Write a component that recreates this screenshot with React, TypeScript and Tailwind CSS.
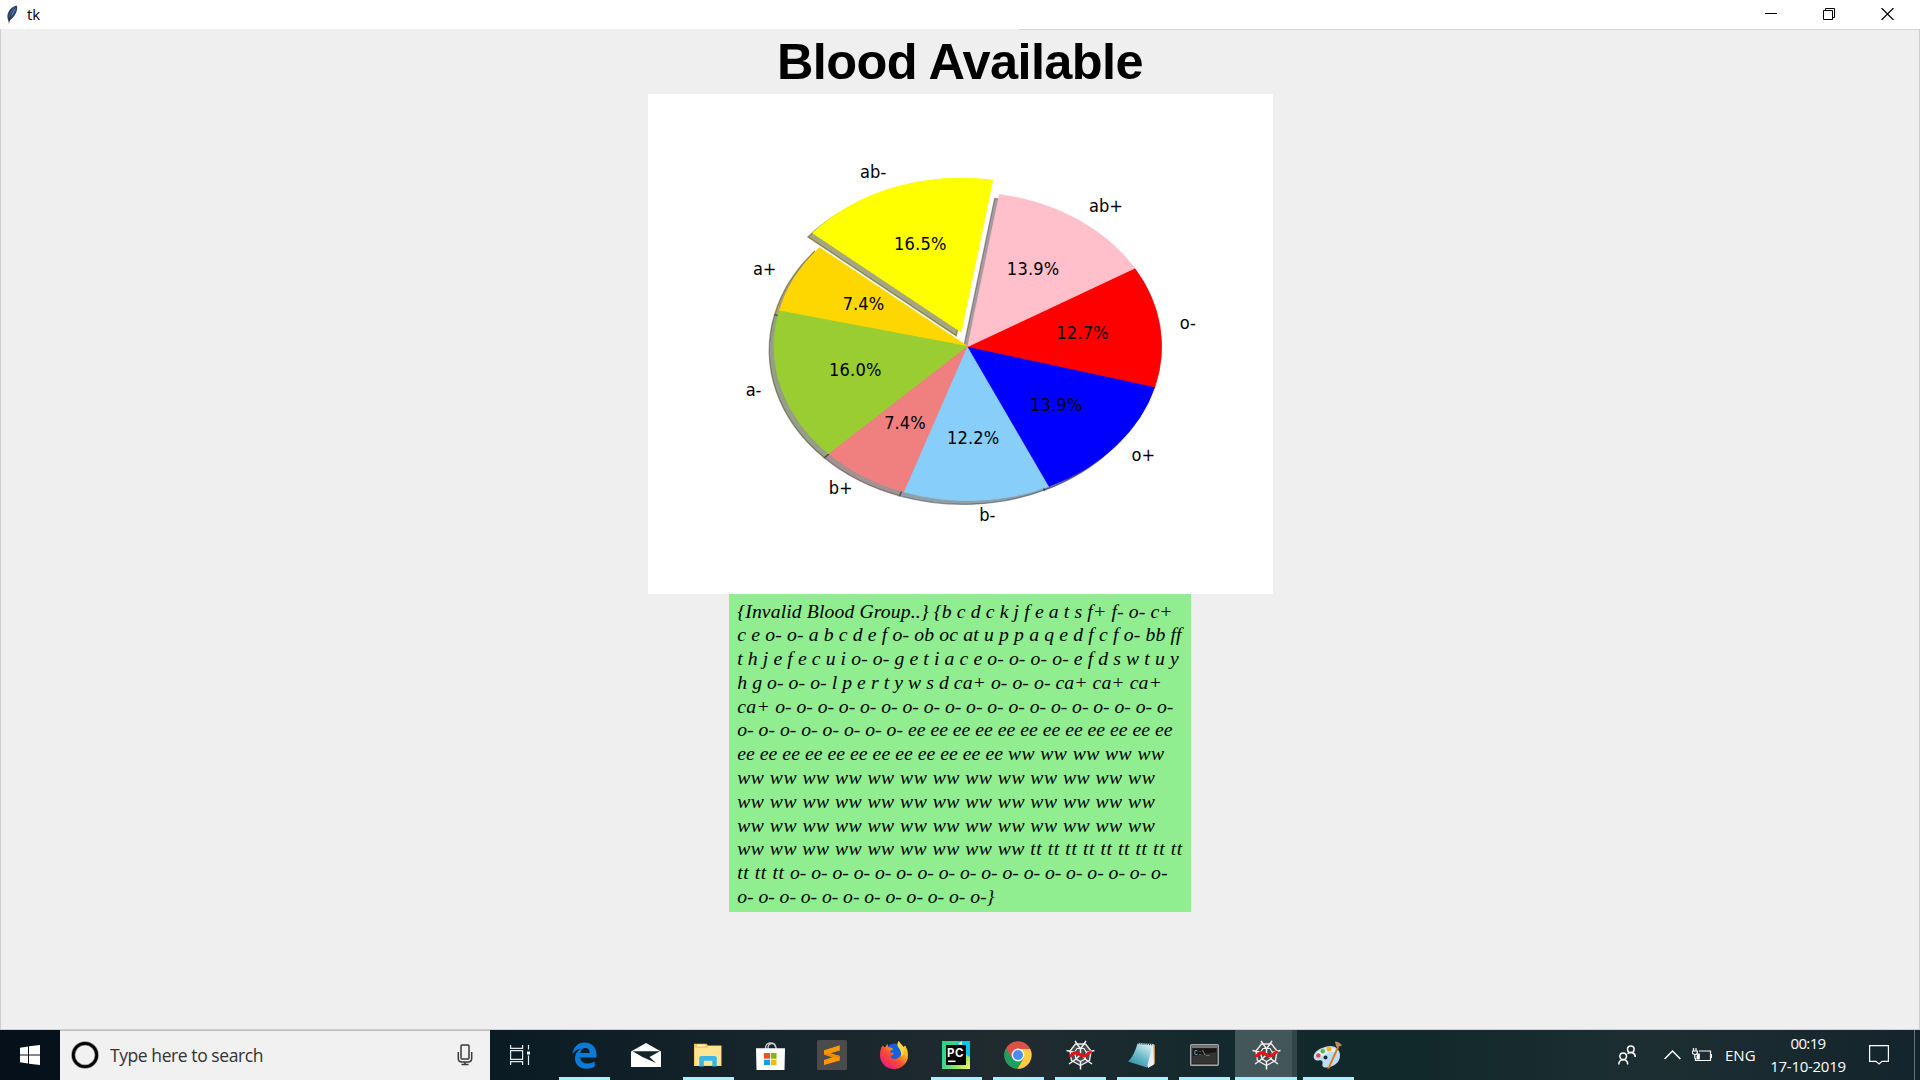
import { useLayoutEffect, useRef, type ReactNode } from "react";

/* Text whose letters are spread so that the run takes a given width. */
function Fit({ text, width, className = "" }: { text: string; width: number; className?: string }) {
  const ref = useRef<HTMLSpanElement>(null);
  useLayoutEffect(() => {
    const el = ref.current;
    if (!el) return;
    el.style.letterSpacing = "0px";
    const natural = el.getBoundingClientRect().width;
    el.style.letterSpacing = `${(width - natural) / text.length}px`;
  }, [text, width]);
  return (
    <span ref={ref} className={`inline-block whitespace-pre ${className}`}>
      {text}
    </span>
  );
}

const rep = (word: string, n: number) => Array(n).fill(word).join(" ");

type Run = [string, number];
const lines: Run[][] = [
  [["{Invalid Blood Group..} ", 196.500], [" {b c d c k j f e a t s f+ f- o- c+".slice(1), 239]],
  [["c e o- o- a b c d e f o- ob oc at u p p a q e d f c f o- bb ff", 444.5]],
  [["t h j e f e c u i o- o- g e t i a c e o- o- o- o- e f d s w t u y", 441.5]],
  [["h g o- o- o- l p e r t y w s d ca+ o- o- o- ca+ ca+ ca+", 424.5]],
  [["ca+ ", 38], [rep("o-", 19), 398]],
  [[rep("o-", 8) + " ", 170.7], [rep("ee", 12), 264.5]],
  [[rep("ee", 12) + " ", 270.7], [rep("ww", 5), 156.5]],
  [[rep("ww", 13), 418]],
  [[rep("ww", 13), 418]],
  [[rep("ww", 13), 418]],
  [[rep("ww", 9) + " ", 293], [rep("tt", 9), 152.5]],
  [[rep("tt", 3) + " ", 52.7], [rep("o-", 18), 377.5]],
  [[rep("o-", 12) + "}", 257]],
];

const slices = [
  { label: "a+", pct: 7.4, color: "#ffd700", shade: "#4d4000", explode: 0 },
  { label: "a-", pct: 16.0, color: "#9acd32", shade: "#2e3d0f", explode: 0 },
  { label: "b+", pct: 7.4, color: "#f08080", shade: "#482626", explode: 0 },
  { label: "b-", pct: 12.2, color: "#87cefa", shade: "#283e4b", explode: 0 },
  { label: "o+", pct: 13.9, color: "#0000ff", shade: "#00004d", explode: 0 },
  { label: "o-", pct: 12.7, color: "#ff0000", shade: "#4d0000", explode: 0 },
  { label: "ab+", pct: 13.9, color: "#ffc0cb", shade: "#4d3a3d", explode: 0 },
  { label: "ab-", pct: 16.5, color: "#ffff00", shade: "#4d4d00", explode: 0.1 },
];

const CX = 327.5;
const CY = 242.4;
const RX = 198.4;
const RY = 147.84;

function PieChart() {
  let angle = 140;
  const at = (deg: number, r: number, ox = 0, oy = 0) => {
    const t = (deg * Math.PI) / 180;
    return [CX + RX * (r * Math.cos(t) + ox), CY - RY * (r * Math.sin(t) + oy)];
  };
  const wedges = slices.map((s) => {
    const a0 = angle;
    const a1 = angle + s.pct * 3.6;
    angle = a1;
    const mid = (a0 + a1) / 2;
    const m = (mid * Math.PI) / 180;
    const ox = s.explode * Math.cos(m);
    const oy = s.explode * Math.sin(m);
    const c = at(0, 0, ox, oy);
    const p0 = at(a0, 1, ox, oy);
    const p1 = at(a1, 1, ox, oy);
    const right = Math.cos(m) > 0;
    const lp = at(mid, 1.1, ox, oy);
    return {
      ...s,
      d: `M${c[0]} ${c[1]}L${p0[0]} ${p0[1]}A${RX} ${RY} 0 0 0 ${p1[0]} ${p1[1]}Z`,
      lx: lp[0] + (right ? 0.8 : -0.9),
      ly: lp[1] + (right ? 4.9 : 4.3),
      tp: at(mid, 0.6, ox, oy),
      anchor: right ? ("start" as const) : ("end" as const),
    };
  });
  return (
    <svg width="625" height="500" viewBox="0 0 640 480" preserveAspectRatio="none" className="block">
      <rect width="640" height="480" fill="#fff" />
      {wedges.map((w) => (
        <path key={w.label} d={w.d} transform="translate(-4.9 3.7)" fill={w.shade} stroke={w.shade} strokeWidth="1.3" fillOpacity=".5" strokeOpacity=".5" />
      ))}
      {wedges.map((w) => (
        <path key={w.label} d={w.d} fill={w.color} stroke={w.color} strokeWidth=".8" />
      ))}
      <g fontFamily='"DejaVu Sans", sans-serif' fontSize="16.67" fill="#000">
        {wedges.map((w) => (
          <g key={w.label}>
            <text x={w.lx} y={w.ly} textAnchor={w.anchor}>{w.label}</text>
            <text x={w.tp[0] - 0.5} y={w.tp[1] + 4.8} textAnchor="middle" textLength={w.pct < 10 ? 42.6 : 53.6}>{w.pct.toFixed(1)}%</text>
          </g>
        ))}
      </g>
    </svg>
  );
}

function Feather() {
  return (
    <svg width="12" height="20" viewBox="0 0 12 20">
      <path d="M10.5.5C6 1.5 2.500 5 1.500 10c-.4 2 .2 4 .8 5.500L3 19l.8-3.500C7.500 13 10 9 11 5c.4-2 .2-3.500-.5-4.500z" fill="#31425c" />
      <path d="M9.500 1.800C6.500 3.500 4 7.500 3.200 12.500 6.500 10.500 9 7 9.800 3.500z" fill="#4b82c8" />
      <path d="M9.800 2C6.500 5 4 10 3.200 16" stroke="#1a222e" strokeWidth=".8" fill="none" />
    </svg>
  );
}

function EdgeIcon() {
  return (
    <svg width="25" height="27" viewBox="0 0 25 27">
      <path d="M.3 12.300C1.300 5 6 .5 12.700.5 20 .5 24.500 5.500 24.500 12.500v3H8.200c.3 4 3.300 6 7.600 6 2.700 0 4.900-.7 6.900-1.900v5.200c-2.400 1.300-5 1.900-8.200 1.900C7.500 26.700 3 22.500 3 16.500c0-4.300 2.300-7.800 6-9.700C5.300 7.200 2.200 9.300.3 12.300zM8.300 11h9.400c0-3.200-1.600-4.900-4.400-4.900-2.700 0-4.500 2-5 4.900z" fill="#0a7bd8" />
    </svg>
  );
}

function MailIcon() {
  return (
    <svg width="30" height="24" viewBox="0 0 30 24">
      <path d="M0 8.500 15 0l15 8.500V24H0z" fill="#fff" />
      <path d="M1.500 8.300h27.500L18.500 14l6.500 6L11.500 14z" fill="#14242b" />
    </svg>
  );
}

function FolderIcon() {
  return (
    <svg width="28" height="24" viewBox="0 0 28 24">
      <path d="M0 .8h12.500L14 2.500h13.500V23H0z" fill="#f4c84d" />
      <path d="M3 1.700h8v1.600H3z" fill="#fff" />
      <path d="M.7 4.800H13L14.500 3H27v19.500H.7z" fill="#ffe593" />
      <path d="M5.200 23.600V15q0-2 2-2h13.600q2 0 2 2v8.600h-4.500v-5.800h-8.500v5.800z" fill="#38b6e6" />
    </svg>
  );
}

function StoreIcon() {
  return (
    <svg width="29" height="29" viewBox="0 0 29 29">
      <path d="M9.500 8V6.500a5.300 5.300 0 0 1 10.500 0V8M12 8V7a3.800 4.500 0 0 1 7.500-1" fill="none" stroke="#c9cfd1" strokeWidth="1.300" />
      <path d="M0 7.300h29L28.500 29H.5z" fill="#fff" />
      <path d="M8 12h6v5.700H8z" fill="#f25022" />
      <path d="M15 12h5.500v5.700H15z" fill="#7fba00" />
      <path d="M8 18.700h6v5.300H8z" fill="#00a4ef" />
      <path d="M15 18.700h5.500v5.300H15z" fill="#ffb900" />
    </svg>
  );
}

function SublimeIcon() {
  return (
    <svg width="30" height="30" viewBox="0 0 30 30">
      <rect width="30" height="30" rx="1.500" fill="#4b4b4b" />
      <path d="M7 10.200 22.800 5.200v5.300L13.500 13.300l9.300 2.700v4.500L7 25v-5l8.500-2.800L7 14.500z" fill="#ff9800" />
      <path d="m7 14.500 3.500-1.200L22.800 16v1.500L15.500 17.200z" fill="#ee8800" />
    </svg>
  );
}

function FirefoxIcon() {
  return (
    <svg width="28" height="28" viewBox="0 0 28 28">
      <defs>
        <linearGradient id="ffx" x1="1" y1="0" x2=".15" y2="1">
          <stop offset="0" stopColor="#fff44f" />
          <stop offset=".35" stopColor="#ffb01f" />
          <stop offset=".6" stopColor="#ff4f2f" />
          <stop offset="1" stopColor="#e3128f" />
        </linearGradient>
      </defs>
      <circle cx="15" cy="13" r="10.500" fill="#1661d8" />
      <path d="M2.500 4.500 5 6.500l2.500-3.800.5 3.600c2 0 4 .3 5.500 2.200-2.500.2-3.500 1.500-3.300 3 1.300 0 2.500 0 3.800 1-1 1.800-2.800 1.500-3.500 3.500 2 2.500 6 2.500 8.500.5 3.500-3 3-8-.5-10.500-1-2-1-4 .5-6C20 2.500 22.500 4 23.500 6l1.500-1.500c2 3 3 6.500 3 10C28 22 22 28 14 28S0 22 0 14c0-3.500.8-7 2.500-9.500z" fill="url(#ffx)" />
      <path d="M18.500 0c1 3 4.500 4 5 8.500.5 4-1 6-2 7.500 0-4-1-7.500-3.500-10C17 4 17.500 1.500 18.500 0z" fill="#ffd83a" />
    </svg>
  );
}

function PyCharmIcon() {
  return (
    <svg width="28" height="28" viewBox="0 0 28 28">
      <defs>
        <linearGradient id="pyc" x1="0" y1="0" x2="1" y2="1">
          <stop offset="0" stopColor="#21d789" />
          <stop offset=".5" stopColor="#3ddc84" />
          <stop offset="1" stopColor="#fcf84a" />
        </linearGradient>
      </defs>
      <path d="M0 0h28v28H0z" fill="url(#pyc)" />
      <path d="M14 3 18 0h10v16l-5-3z" fill="#07c3f2" />
      <path d="M16 3 20 0v4z" fill="#fcf84a" />
      <path d="M4 4h20v20H4z" fill="#000" />
      <text x="5" y="15.500" fontFamily="Inter, sans-serif" fontWeight="700" fontSize="11.500" fill="#fff" textLength="16.500">PC</text>
      <path d="M6 19.500h7.500v1.600H6z" fill="#fff" />
    </svg>
  );
}

function ChromeIcon() {
  return (
    <svg width="28" height="28" viewBox="0 0 28 28">
      <circle cx="14" cy="14" r="13.700" fill="#dd5144" />
      <path d="M2.100 7.200A13.700 13.700 0 0 0 13.500 27.700l6-10.500-11.400.1z" fill="#1aa15f" />
      <path d="M26.200 8H14l5.800 9.200L13.500 27.700A13.700 13.700 0 0 0 26.200 8z" fill="#ffcd42" />
      <circle cx="14" cy="14" r="6.400" fill="#f4f4f4" />
      <circle cx="14" cy="14" r="5" fill="#4c8bf5" />
    </svg>
  );
}

function SpyderIcon() {
  return (
    <svg width="29" height="30" viewBox="0 0 29 30" fill="none">
      <path d="M9.500 4h10l5.500 7-1.500 9.500-9 5L5.500 20.500 4 11z" fill="#454b4e" stroke="#e9e9e9" strokeWidth="1.400" />
      <path d="M14.500 9 9 .8M14.500 9 20 .8M20 12.500l8.500-2M19 19l7 5M14.500 21.500v8M10 19l-7 5M9 12.500.5 10.500M14.500 14.500v-6M14.500 14.500l5 4.500M14.500 14.500 10 19" stroke="#f1f1f1" strokeWidth="1.500" />
      <path d="M11 8.500h7l2.500 4-1.500 6.500-4.500 2.500L10 19l-1.500-6.500z" stroke="#f1f1f1" strokeWidth="1.200" />
      <path d="M4.500 16c2.500-3 5-4 7.500-2.700s4.500 3.500 7 2.700c2-.8 2.700-3 5.500-4" stroke="#f40a0a" strokeWidth="2.800" strokeLinecap="round" />
    </svg>
  );
}

function NotepadIcon() {
  return (
    <svg width="28" height="28" viewBox="0 0 28 28">
      <defs>
        <linearGradient id="np" x1=".8" y1="0" x2=".2" y2="1">
          <stop offset="0" stopColor="#d9f1f5" />
          <stop offset=".5" stopColor="#6fbccb" />
          <stop offset="1" stopColor="#2b8ea3" />
        </linearGradient>
      </defs>
      <path d="m25 3 2 1v18.500L23 25z" fill="#b98a4a" />
      <path d="m10 2 15.500 1L26 23.500 20 27z" fill="#e8eff1" />
      <path d="M9.500 2.500 24.500 4 19 26.500 0 20.500C4 17 7.500 10 9.500 2.500z" fill="url(#np)" />
      <path d="M10 2.200 25 3.500" stroke="#3f4b4e" strokeWidth="2" strokeDasharray="1.200 1" />
    </svg>
  );
}

function ConsoleIcon() {
  return (
    <svg width="29" height="22" viewBox="0 0 29 22">
      <rect x=".7" y=".7" width="27.600" height="20.600" rx="1" fill="#2b2b2b" stroke="#a8a8a8" strokeWidth="1.400" />
      <path d="M2 2h25v2H2z" fill="#777" />
      <path d="M3 4.500h23v14.500H3z" fill="#161616" />
      <path d="M3 12 26 8v11H3z" fill="#343434" />
      <text x="4" y="10.500" fontFamily='"Liberation Mono", monospace' fontSize="6.500" fill="#c4c4c4">C:\_</text>
    </svg>
  );
}

function PaintIcon() {
  return (
    <svg width="30" height="28" viewBox="0 0 30 28">
      <path d="M13.500 5.500C20 3.500 26.500 7 27 13.500 27.500 21 21 26.500 13 26.500c-3.500 0-4-2-3.500-4 .5-2-.5-3.500-3-3.200C3 20 0 18.500.8 14.500 1.800 10 7.500 7 13.500 5.500z" fill="#bfdcf2" />
      <path d="M14 7c5-1.500 10 1 11 6-3-3-8-3-12 0s-8 3-11 2C3.500 11 8 8.500 14 7z" fill="#e4f2fc" />
      <circle cx="5.300" cy="14.500" r="2.300" fill="#e2463c" />
      <circle cx="9.800" cy="10.300" r="2.300" fill="#57b947" />
      <circle cx="16" cy="8" r="2.500" fill="#f4b223" />
      <circle cx="12.500" cy="16.500" r="2" fill="#173037" />
      <path d="m24.500 5 1.800.8L16.500 27.500l-2.300.5z" fill="#d97a1c" />
      <path d="M22 .5c3 0 5 1.500 7 4-2 .5-4 1.500-5 1.500S22.500 3 22 .5z" fill="#b98c5c" />
    </svg>
  );
}

function TaskSlot({ children, running = false, active = false }: { children: ReactNode; running?: boolean; active?: boolean }) {
  return (
    <div className={`relative flex h-[50px] w-[62px] shrink-0 items-center justify-center ${active ? "border-r-[5px] border-[#344649] bg-[#435659] pl-[5px]" : ""}`}>
      {children}
      {running && (
        <div className={`absolute bottom-0 h-[3px] bg-[#aeeefa] ${active ? "-right-[5px] left-0" : "left-[6px] w-[51px]"}`} />
      )}
    </div>
  );
}

function Taskbar() {
  return (
    <div className="flex h-[50px] w-full bg-[linear-gradient(90deg,#05101a_0%,#0b1b23_26%,#18262d_42%,#202b30_53%,#12292d_65%,#12292c_74%,#1d2e33_86%,#13242c_100%)] font-['Open_Sans',sans-serif] text-white">
      <div className="flex w-[60px] items-center justify-center">
        <svg width="20" height="20" viewBox="0 0 20 20" fill="#fff">
          <path d="M0 2.700 8 1.500v8H0zM9 1.300 20 0v9.500H9zM0 10.500h8v8l-8-1.200zM9 10.500h11V20L9 18.700z" />
        </svg>
      </div>
      <div className="flex w-[430px] items-center border-t border-[#bdbdbd] bg-[#f1f1f1] pl-[11px] text-[#333]">
        <svg width="28" height="28" viewBox="0 0 28 28" className="mb-px">
          <circle cx="14" cy="14" r="11.700" fill="none" stroke="#000" strokeOpacity=".4" strokeWidth="4.200" />
          <circle cx="14" cy="14" r="11.700" fill="none" stroke="#000" strokeWidth="2.800" />
        </svg>
        <Fit text="Type here to search" width={153} className="mb-[2px] ml-[11px] text-[17.5px] leading-6" />
        <svg width="16" height="22" viewBox="0 0 16 22" className="mr-[17px] mb-[2px] ml-auto" fill="none" stroke="#3a3a3a" strokeWidth="1.500">
          <rect x="4" y="1" width="8" height="14" rx="1" />
          <path d="M1.300 8v6.500q0 3.500 3.700 3.500h6q3.700 0 3.700-3.500V8M8 18v2.500M4.500 20.500h7" />
        </svg>
      </div>
      <div className="flex w-[63px] items-center pl-5">
        <svg width="20" height="20" viewBox="0 0 20 20" fill="none" stroke="#e6e9ea" strokeWidth="1.200">
          <path d="M.6 0v3.400h12V0M.6 20v-3.400h12V20M.6 5.600h12v8.800H.6zM18.500 0v4.500M18.500 10.500V20" />
          <path d="M17 6.500h3v3h-3z" fill="#fff" stroke="none" />
        </svg>
      </div>
      <TaskSlot running><EdgeIcon /></TaskSlot>
      <TaskSlot><MailIcon /></TaskSlot>
      <TaskSlot running><FolderIcon /></TaskSlot>
      <TaskSlot><StoreIcon /></TaskSlot>
      <TaskSlot><SublimeIcon /></TaskSlot>
      <TaskSlot><FirefoxIcon /></TaskSlot>
      <TaskSlot running><PyCharmIcon /></TaskSlot>
      <TaskSlot running><ChromeIcon /></TaskSlot>
      <TaskSlot running><SpyderIcon /></TaskSlot>
      <TaskSlot running><NotepadIcon /></TaskSlot>
      <TaskSlot running><ConsoleIcon /></TaskSlot>
      <TaskSlot running active><SpyderIcon /></TaskSlot>
      <TaskSlot running><PaintIcon /></TaskSlot>
      <div className="ml-auto flex items-center">
        <svg width="18" height="20" viewBox="0 0 18 20" fill="none" stroke="#fff" strokeWidth="1.500">
          <circle cx="12.800" cy="4.300" r="3.300" />
          <circle cx="5.200" cy="11.300" r="3.300" />
          <path d="M.8 19.500c0-3 1.500-4.800 4.400-4.800s4.500 1.800 4.500 4.800M9.500 8.500c4.500-2 7.700-.5 7.700 3.500" />
        </svg>
        <svg width="17" height="10" viewBox="0 0 17 10" className="ml-[28px]" fill="none" stroke="#fff" strokeWidth="1.400">
          <path d="M.6 9 8.500 1l7.900 8" />
        </svg>
        <svg width="20" height="14" viewBox="0 0 20 14" className="ml-[11px]" fill="none" stroke="#fff" strokeWidth="1.200">
          <path d="M7 3h11.500v9.500H3.500V10M19.400 6v4" />
          <path d="M5.500 5.500h2.300v6H4.500V8.500z" fill="#fff" stroke="none" />
          <path d="M1.500 0v3M4 0v3M.3 3h5v1.500q0 2-2.500 2-2.200 0-2.500-2zM2.800 6.500v4" />
        </svg>
        <Fit text="ENG" width={28} className="mr-px ml-[13px] w-[28px] text-[15px] leading-5" />
        <div className="ml-[16px] flex w-[76px] flex-col items-center text-[15px] leading-[23px]">
          <Fit text="00:19" width={35} />
          <Fit text="17-10-2019" width={75.5} />
        </div>
        <svg width="20" height="20" viewBox="0 0 20 20" className="ml-[23px]" fill="none" stroke="#fff" strokeWidth="1.200">
          <path d="M.6.6h18.800v15.800H13L10 19l-3-2.600H.6z" />
        </svg>
        <div className="mr-[5px] ml-[25px] h-[50px] w-px bg-[#67757a]" />
      </div>
    </div>
  );
}

export default function App() {
  return (
    <div className="flex h-[1080px] w-[1920px] flex-col overflow-hidden bg-white">
      <div className="flex h-[29px] items-center pl-[6px] text-black">
        <Feather />
        <Fit text="tk" width={13} className="mb-px ml-[9px] font-['Open_Sans',sans-serif] text-[15px] leading-5" />
        <div className="ml-auto flex items-center gap-[46px] pr-[26px] pb-px">
          <svg width="12" height="12" viewBox="0 0 12 12"><path d="M0 5h12v1H0z" fill="#000" /></svg>
          <svg width="12" height="12" viewBox="0 0 12 12" fill="none" stroke="#000">
            <path d="M.5 2.500h9v9h-9zM2.500 2.500v-2h9v9h-2" />
          </svg>
          <svg width="13" height="12" viewBox="0 0 13 12" stroke="#000" strokeWidth="1.200"><path d="m.5 0 12 12M12.500 0l-12 12" /></svg>
        </div>
      </div>
      <div className="flex h-[1001px] flex-col items-center border-x border-b border-[#cfcfcf] bg-[#efefef]">
        <div className="h-px w-[900px] self-end bg-[#d6d6d6]" />
        <h1 className="flex h-16 items-center font-['Liberation_Sans',Arial,sans-serif] text-[50.5px] leading-[64px] font-bold text-black">
          <Fit text="Blood Available" width={366} />
        </h1>
        <PieChart />
        <div className="h-[318px] w-[462.5px] bg-[#90ee90] pt-[5.5px] pl-[8.5px] font-['Liberation_Serif','Times_New_Roman',serif] text-[19.7px] leading-[23.8px] text-black italic">
          {lines.map((runs, i) => (
            <div key={i} className="h-[23.8px] whitespace-nowrap">
              {runs.map(([text, width], j) => (
                <Fit key={j} text={text} width={width} />
              ))}
            </div>
          ))}
        </div>
      </div>
      <Taskbar />
    </div>
  );
}
